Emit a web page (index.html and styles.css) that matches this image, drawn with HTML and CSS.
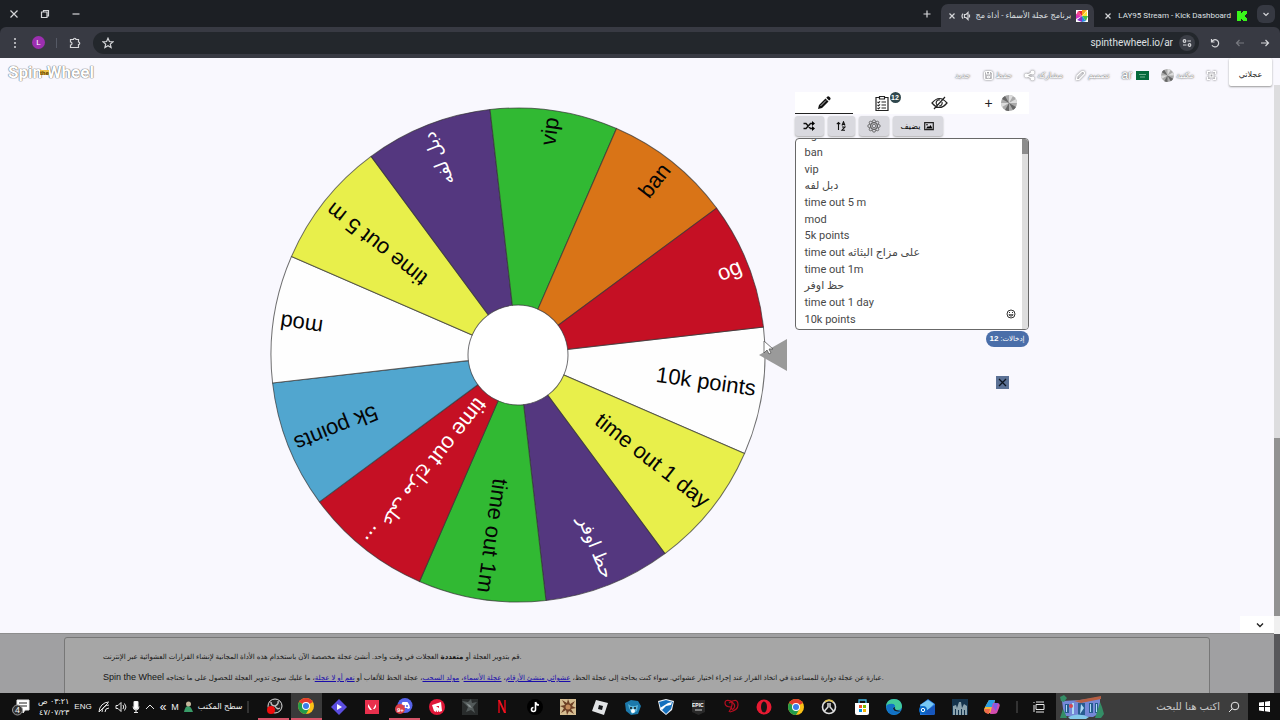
FILE: index.html
```html
<!DOCTYPE html>
<html lang="ar">
<head>
<meta charset="utf-8">
<title>برنامج عجلة الأسماء</title>
<link rel="stylesheet" href="styles.css">
</head>
<body>
<svg width="0" height="0" class="defs" aria-hidden="true">
  <defs>
    <path id="wedge" d="M48.3-12.9 238.6-63.9A247 247 0 0 1 238.6 63.9L48.3 12.9A50 50 0 0 0 48.3-12.9Z"/>
    <g id="chrome-logo">
      <circle cx="8" cy="8" r="8" fill="#fbc116"/>
      <path d="M8 8 1.1 4A8 8 0 0 1 14.9 4Z" fill="#e33b2e"/>
      <path d="M8 8 1.1 4A8 8 0 0 0 8 16L11.5 10Z" fill="#229b4b"/>
      <circle cx="8" cy="8" r="4" fill="#fff"/><circle cx="8" cy="8" r="3" fill="#3b7de9"/>
    </g>
    <g id="grey-wheel">
      <circle cx="8" cy="8" r="8" fill="#aaa"/>
      <path d="M8 8V0A8 8 0 0 1 12 1ZM8 8l7-4a8 8 0 0 1 1 4ZM8 8l-7 4a8 8 0 0 1-1-4Z" fill="#ddd"/>
      <path d="M8 8v8a8 8 0 0 1-4-1ZM8 8l7 4a8 8 0 0 1-3 3ZM8 8 1 4a8 8 0 0 1 3-3Z" fill="#666"/>
    </g>
  </defs>
</svg>

<header class="browser">
  <div class="tabstrip">
    <div class="window-buttons">
      <button aria-label="إغلاق"><svg width="10" height="10" viewBox="0 0 10 10"><path d="M1.500 1.500l7 7m0-7l-7 7"/></svg></button>
      <button aria-label="استعادة"><svg width="10" height="10" viewBox="0 0 10 10"><path d="M1.500 3h5.500v5.500H1.500zM3.500 3V1.500h5V7H7"/></svg></button>
      <button aria-label="تصغير"><svg width="10" height="10" viewBox="0 0 10 10"><path d="M1.500 5h7"/></svg></button>
    </div>
    <div class="tabs">
      <button class="new-tab" aria-label="علامة تبويب جديدة"><svg width="10" height="10" viewBox="0 0 10 10"><path d="M5 1.500v7M1.500 5h7"/></svg></button>
      <div class="tab active">
        <button aria-label="إغلاق"><svg width="8" height="8" viewBox="0 0 8 8"><path d="M1.500 1.500l5 5m0-5l-5 5"/></svg></button>
        <svg width="10" height="10" viewBox="0 0 10 10"><path d="M3.500 3.500v3h1.500l2 2v-7l-2 2zM2 2.500a4 4 0 0 0 0 5M8.500 3.500v3"/></svg>
        <span class="tab-title" dir="rtl">برنامج عجلة الأسماء - أداة مج</span>
        <svg class="solid" width="12" height="12" viewBox="0 0 12 12"><path fill="#fff" d="M0 0h12v12H0z"/><path fill="#e42537" d="M6 6 2 1h4z"/><path fill="#f6a21b" d="M6 6V0h5z"/><path fill="#fde233" d="M6 6l5-5v5z"/><path fill="#45be42" d="M6 6h6l-2 5z"/><path fill="#2788df" d="M6 6l4 5-4 1z"/><path fill="#8630c9" d="M6 6v6l-5-2z"/><path fill="#d935bc" d="M6 6 0 9V4z"/><path fill="#f24591" d="M6 6 0 5l2-4z"/></svg>
      </div>
      <div class="tab">
        <button aria-label="إغلاق"><svg width="8" height="8" viewBox="0 0 8 8"><path d="M1.500 1.500l5 5m0-5l-5 5"/></svg></button>
        <span>LAY95 Stream - Kick Dashboard</span>
        <svg class="solid" width="10" height="10" viewBox="0 0 10 10"><path fill="#39f51a" d="M0 0h4v2h1V1h1V0h4v3H9v1H8v2h1v1h1v3H6V9H5V8H4v2H0z"/></svg>
      </div>
      <button class="tab-search" aria-label="البحث في علامات التبويب"><svg width="8" height="8" viewBox="0 0 8 8"><path d="M1.500 3 4 5.500 6.500 3"/></svg></button>
    </div>
  </div>
  <div class="toolbar">
    <button aria-label="القائمة"><svg class="solid" width="10" height="12" viewBox="0 0 10 12"><g fill="#d5d6d9"><circle cx="5" cy="2" r="1"/><circle cx="5" cy="6" r="1"/><circle cx="5" cy="10" r="1"/></g></svg></button>
    <button class="avatar">L</button>
    <span class="divider"></span>
    <button aria-label="الإضافات"><svg width="12" height="12" viewBox="0 0 12 12"><path d="M1.500 2.500h3a1.200 1.200 0 0 1 2.500 0h2.500V5a1.200 1.200 0 0 1 0 2.500v3h-8V8a1.500 1.500 0 0 0 0-3z"/></svg></button>
    <div class="address">
      <button aria-label="إشارة مرجعية"><svg width="12" height="12" viewBox="0 0 12 12"><path d="M6 1.200 7.400 4.500l3.600.3-2.700 2.300.8 3.500L6 8.800l-3.100 1.800.8-3.500L1 4.800l3.600-.3z"/></svg></button>
      <input aria-label="العنوان" value="spinthewheel.io/ar">
      <button class="site-info" aria-label="معلومات الموقع"><svg width="10" height="10" viewBox="0 0 10 10"><circle cx="2.500" cy="3" r="1.300"/><path d="M5.500 3h3.500M1 7h3.500"/><circle cx="7.500" cy="7" r="1.300"/></svg></button>
    </div>
    <button aria-label="إعادة تحميل"><svg width="10" height="10" viewBox="0 0 10 10"><path d="M1.500 1v3h3M1.700 4A3.600 3.600 0 1 1 2 7.200"/></svg></button>
    <button class="dim" aria-label="للأمام"><svg width="10" height="10" viewBox="0 0 10 10"><path d="M9 5H1.500M4.500 2l-3 3 3 3"/></svg></button>
    <button aria-label="رجوع"><svg width="10" height="10" viewBox="0 0 10 10"><path d="M1 5h7.500M5.500 2l3 3-3 3"/></svg></button>
  </div>
</header>

<div class="viewport">
<div class="page">
  <header class="site-header">
    <a class="logo" href="#"><span>Spin</span><small>the</small><span>Wheel</span></a>
    <nav>
      <a href="#">جديد</a>
      <a href="#"><svg width="11" height="11" viewBox="0 0 11 11"><path d="M1.500 3q0-1.500 1.500-1.500h5L9.500 3v5q0 1.500-1.500 1.500H3Q1.500 9.500 1.500 8zM3.500 2v2h3V2"/><circle cx="5.500" cy="7" r="1"/></svg>حفظ</a>
      <a href="#"><svg width="11" height="11" viewBox="0 0 11 11"><path d="M8.500 2.500 2.500 5.500l6 3"/><g class="dots"><circle cx="8.500" cy="2.500" r="1.400"/><circle cx="2.500" cy="5.500" r="1.400"/><circle cx="8.500" cy="8.500" r="1.400"/></g></svg>مشاركة</a>
      <a href="#"><svg width="11" height="11" viewBox="0 0 11 11"><path d="M2 6 6.500 1.800q2-1 3 .8.300 1-.5 1.800L4 9.500l-2.500.2z"/></svg>تصميم</a>
      <a href="#" class="lang">ar<svg width="13" height="9" viewBox="0 0 13 9"><path d="M0 0h13v9H0z" fill="#056a3b"/><path d="M3 3.500h7M4 6h5" stroke="#9fd0b4" stroke-width=".7"/></svg></a>
      <a href="#"><svg width="13" height="13" viewBox="0 0 16 16" class="round"><use href="#grey-wheel"/></svg>مكتبة</a>
      <a href="#" aria-label="ملء الشاشة"><svg width="11" height="11" viewBox="0 0 11 11"><path d="M1.500 4V1.500H4M7 1.500h2.500V4M9.500 7v2.500H7M4 9.500H1.500V7M4 4h3v3H4z"/></svg></a>
      <button class="my-wheels">عجلاتي</button>
    </nav>
  </header>

  <main>
    <svg class="wheel" viewBox="-248 -248 520 496" role="img" aria-label="عجلة">
      <g class="slices">
        <use href="#wedge" transform="rotate(8.500)" fill="#fefefe"/>
        <use href="#wedge" transform="rotate(38.500)" fill="#e8ef4b"/>
        <use href="#wedge" transform="rotate(68.500)" fill="#54377f"/>
        <use href="#wedge" transform="rotate(98.500)" fill="#31b933"/>
        <use href="#wedge" transform="rotate(128.500)" fill="#c51024"/>
        <use href="#wedge" transform="rotate(158.500)" fill="#51a6cf"/>
        <use href="#wedge" transform="rotate(188.500)" fill="#fefefe"/>
        <use href="#wedge" transform="rotate(218.500)" fill="#e8ef4b"/>
        <use href="#wedge" transform="rotate(248.500)" fill="#54377f"/>
        <use href="#wedge" transform="rotate(278.500)" fill="#31b933"/>
        <use href="#wedge" transform="rotate(308.500)" fill="#d97417"/>
        <use href="#wedge" transform="rotate(338.500)" fill="#c51024"/>
      </g>
      <circle r="49" fill="#fff"/>
      <g class="labels">
        <text x="240" y="0" transform="rotate(8)">10k points</text>
        <text x="240" y="0" transform="rotate(38)">time out 1 day</text>
        <text x="240" y="0" transform="rotate(68)" class="light ar">حظ اوفر</text>
        <text x="240" y="0" transform="rotate(98)">time out 1m</text>
        <text x="240" y="0" transform="rotate(128)" class="light">time out <tspan class="ar">على مزاج</tspan> ...</text>
        <text x="240" y="0" transform="rotate(158)">5k points</text>
        <text x="240" y="0" transform="rotate(188)">mod</text>
        <text x="240" y="0" transform="rotate(218)">time out 5 m</text>
        <text x="240" y="0" transform="rotate(248)" class="light ar">دبل لفه</text>
        <text x="240" y="0" transform="rotate(278)">vip</text>
        <text x="240" y="0" transform="rotate(308)">ban</text>
        <text x="240" y="0" transform="rotate(338)" class="light">og</text>
      </g>
      <path d="M241 0 269-16V16Z" fill="#9a9a9a"/>
      <path d="M246-14v12l3-3 2 4 2-1-2-4h4z" fill="#fff" stroke="#555" stroke-width=".8"/>
    </svg>

    <section class="panel">
      <div class="panel-tabs">
        <button class="selected" aria-label="تحرير"><svg width="14" height="14" viewBox="0 0 14 14"><path d="M1 13 2 9 8.500 2.500l3 3L5 12zM9.300 1.700 10.500.6q1-.6 1.800.2l1 1q.6.900 0 1.600l-1.200 1.200z" fill="#111"/><path d="M3.500 10 9 4.500" stroke="#fff" stroke-width=".7"/></svg></button>
        <button aria-label="النتائج"><svg width="16" height="17" viewBox="0 0 16 17" class="line"><path d="M5 2.500H2v13h12v-13h-3M5.500 1.500h5v2.500h-5zM7.500 7H12M7.500 10H12M7.500 13H12M3.500 7l1 .8L6 6.300M3.500 10l1 .8L6 9.300M3.500 13l1 .8L6 12.300"/></svg><span class="badge">12</span></button>
        <button aria-label="إخفاء"><svg width="17" height="14" viewBox="0 0 17 14" class="line"><path d="M1 7q7.500-9 15 0-7.500 9-15 0zM3 13 14 1M6 9a3 3 0 0 1 3-5M11 6a3 3 0 0 1-3 4"/></svg></button>
        <button class="add" aria-label="إضافة عجلة">+<svg width="16" height="16" viewBox="0 0 16 16"><use href="#grey-wheel"/></svg></button>
      </div>
      <div class="tools">
        <button aria-label="خلط"><svg width="12" height="10" viewBox="0 0 12 10"><path d="M.5 2.500H3l4.500 5h2.500M.5 7.500H3l4.500-5h2.500" fill="none" stroke="#111" stroke-width="1.400"/><path d="M9 0l3 2.500L9 5zM9 5l3 2.500L9 10z"/></svg></button>
        <button aria-label="فرز"><svg width="10" height="10" viewBox="0 0 10 10"><path d="M2.500 9V1.500M.8 3.200 2.500 1.500l1.700 1.700M6 4.500 7.500.8 9 4.500M6.500 3.500h2M6 6h3L6 9.200h3" fill="none" stroke="#111" stroke-width="1.100"/></svg></button>
        <button aria-label="تأثير"><svg width="14" height="14" viewBox="-7 -7 14 14" class="thin"><circle r="1.800"/><circle r="3.400"/><circle cy="-4.700" r="1.500"/><circle cy="4.700" r="1.500"/><circle cx="-4.700" r="1.500"/><circle cx="4.700" r="1.500"/><circle cx="3.300" cy="3.300" r="1.500"/><circle cx="-3.300" cy="3.300" r="1.500"/><circle cx="3.300" cy="-3.300" r="1.500"/><circle cx="-3.300" cy="-3.300" r="1.500"/></svg></button>
        <button class="wide">يضيف<svg width="10" height="9" viewBox="0 0 10 9"><path d="M.7.700h8.600v7H.7z" fill="none" stroke="#222" stroke-width="1.200"/><path d="M2 6.500 4 4l1 1 1.500-2L8.500 6.500z"/><circle cx="3" cy="2.700" r=".8"/></svg></button>
      </div>
      <div class="entries">
        <ul>
          <li>og</li><li>ban</li><li>vip</li><li>دبل لفه</li><li>time out 5 m</li><li>mod</li><li>5k points</li><li>time out على مزاج البثاثه</li><li>time out 1m</li><li>حظ اوفر</li><li>time out 1 day</li><li>10k points</li>
        </ul>
        <div class="mini-scroll"><span></span></div>
        <button class="emoji" aria-label="رموز"><svg width="10" height="10" viewBox="0 0 10 10"><circle cx="5" cy="5" r="4"/><path d="M2.800 5.800q2.200 3 4.400 0z"/><path d="M3.500 3v1M6.500 3v1"/></svg></button>
      </div>
      <span class="count" dir="rtl">إدخالات: <b>12</b></span>
      <button class="close" aria-label="إغلاق"><svg width="13" height="13" viewBox="0 0 13 13"><path d="M3 3l7 7M10 3l-7 7" fill="none" stroke="#0c1420" stroke-width="1.300"/></svg></button>
    </section>
  </main>

  <button class="collapse" aria-label="طي"><svg width="10" height="8" viewBox="0 0 10 8"><path d="M2 2.500 5 5.500 8 2.500" fill="none" stroke="#222" stroke-width="1.400"/></svg></button>

  <section class="about">
    <article>
      <p>قم بتدوير العجلة أو <b>متعددة</b> العجلات في وقت واحد. أنشئ عجلة مخصصة الآن باستخدام هذه الأداة المجانية لإنشاء القرارات العشوائية عبر الإنترنت.</p>
      <p><span class="latin">Spin the Wheel</span> عبارة عن عجلة دوارة للمساعدة في اتخاذ القرار عند إجراء اختيار عشوائي. سواء كنت بحاجة إلى عجلة الحظ، <a href="#">عشوائي منشئ الأرقام</a>، <a href="#">عجلة الأسماء</a>، <a href="#">مولد السحب</a>، عجلة الحظ للألعاب أو <a href="#">نعم أو لا عجلة</a>، ما عليك سوى تدوير العجلة للحصول على ما تحتاجه.</p>
    </article>
  </section>
</div>
<div class="page-scroll"><span></span></div>
</div>

<footer class="taskbar">
  <div class="tray">
    <button class="notify" aria-label="الإشعارات"><svg width="20" height="18" viewBox="0 0 20 18"><path d="M6 2h12v10h-4l-2 3v-3H6z" fill="#fff"/><path d="M8 5h8M8 8h8" stroke="#222"/><circle cx="6.500" cy="12" r="5" fill="#333" stroke="#999"/></svg><span>4</span></button>
    <time dir="rtl"><span>٠٣:٢١ ص</span><span>٤٧/٠٧/٢٣</span></time>
    <button class="language">ENG</button>
    <svg width="12" height="12" viewBox="0 0 12 12"><path d="M1 11A10 10 0 0 1 11 1M4 11a7 7 0 0 1 7-7M7 11a4 4 0 0 1 4-4M1 11 10 2"/></svg>
    <svg width="12" height="12" viewBox="0 0 12 12"><path d="M1 4.500h2l3-3v9l-3-3H1zM8 4q1.500 2 0 4M9.500 2.500q3 3.500 0 7"/></svg>
    <svg width="8" height="12" viewBox="0 0 8 12"><rect x="2" width="4" height="8" rx="1" fill="#fff"/><path d="M1 5.500q0 3.500 3 3.500t3-3.500M4 9v2M2 11.500h4"/></svg>
    <svg width="10" height="10" viewBox="0 0 10 10"><path d="M1 7l4-4 4 4"/></svg>
    <div class="desk"><span class="more">«</span><span>M</span><svg width="9" height="12" viewBox="0 0 9 12"><path d="M0 11q1-6 4-6t5 6z" fill="#399c68" stroke="none"/><circle cx="4.500" cy="3" r="2.500" fill="#c6b79c" stroke="none"/></svg><span class="desk-name">سطح المكتب</span></div>
    <span class="grip"></span>
  </div>
  <div class="apps">
    <button class="open" aria-label="OBS"><svg width="18" height="16" viewBox="0 0 18 16"><circle cx="10" cy="8" r="7" fill="#222" stroke="#ddd"/><path d="M10 8q-4 0-4-4M10 8q4-2 3-5M10 8q2 4 5 2" stroke="#bbb" stroke-width="1.500"/><circle cx="6" cy="12" r="4" fill="#f00b0b" stroke="none"/></svg></button>
    <button class="open current" aria-label="Chrome"><svg width="16" height="16" viewBox="0 0 16 16" class="flat"><use href="#chrome-logo"/></svg></button>
    <button aria-label="Medal"><svg width="16" height="16" viewBox="0 0 16 16" class="flat"><path d="M8 0l8 8-8 8-8-8z" fill="#5b4de0"/><path d="M6 5v6l5-3z" fill="#fff"/></svg></button>
    <button aria-label="Valorant"><svg width="14" height="14" viewBox="0 0 14 14" class="flat"><path d="M0 0h14v14H0z" fill="#e8304d"/><path d="M3 4l4 6H5L3 7zM8 9l3-5v3L9.500 9z" fill="#fff"/></svg></button>
    <button class="open" aria-label="Discord"><svg width="18" height="16" viewBox="0 0 18 16" class="flat"><circle cx="10" cy="7.500" r="7.500" fill="#5663e8"/><path d="M6 10q0-4 1.500-6h5Q15 7 15 10l-2 1-1-1H9l-1 1z" fill="#fff"/><circle cx="9" cy="8" r="1" fill="#5663e8"/><circle cx="12" cy="8" r="1" fill="#5663e8"/><circle cx="5" cy="11" r="5" fill="#da3e45"/><text x="2" y="14">9+</text></svg></button>
    <button aria-label="Riot"><svg width="16" height="16" viewBox="0 0 16 16" class="flat"><circle cx="8" cy="8" r="8" fill="#df1738"/><path d="M3 6l9-3 1 9-3 1v-2l-1 2H8l-1-2v2l-2-1z" fill="#fff"/><path d="M7 7h3v2z" fill="#df1738"/></svg></button>
    <button aria-label="Game"><svg width="16" height="16" viewBox="0 0 16 16" class="flat"><path d="M0 0h16v16H0z" fill="#292c2c"/><path d="M0 2l6 1 3-3 1 4 5-1-4 5 2 6-4-3-5 2 2-5-3-3z" fill="#535a5a"/><path d="M4 4l4 2 2 3-3-1z" fill="#8a9292"/></svg></button>
    <button aria-label="Netflix"><svg width="8" height="13" viewBox="0 0 8 13" class="flat"><path d="M0 0h2v13H0zM6 0h2v13H6z" fill="#a70914"/><path d="M0 0h2l6 13H6z" fill="#ee1320"/></svg></button>
    <button aria-label="TikTok"><svg width="16" height="16" viewBox="0 0 16 16"><circle cx="8" cy="8" r="8" fill="#000" stroke="none"/><path d="M8.500 3v7.500a2 2 0 1 1-2-2M8.500 3q.5 3 3.500 3" stroke="#fff" stroke-width="1.600"/></svg></button>
    <button aria-label="Game"><svg width="16" height="16" viewBox="0 0 16 16" class="flat"><path d="M0 0h16v16H0z" fill="#d5bd91"/><path d="M8 0l2 5 5-3-3 5 4 2-5 1 3 5-5-3-2 4-1-5-5 3 3-5-4-2 5-1-3-5 5 3z" fill="#6d4026"/><circle cx="8" cy="8" r="2.500" fill="#c48b5b"/></svg></button>
    <button aria-label="Roblox"><svg width="16" height="16" viewBox="0 0 16 16" class="flat"><path d="M4 1l12 3-4 12L0 12z" fill="#e1e3e5"/><path d="M7 6l4 1-1 4-4-1z" fill="#15171a"/></svg></button>
    <button aria-label="Game"><svg width="16" height="16" viewBox="0 0 16 16" class="flat"><path d="M0 4l6-3 7 1 3 5-3 8-7 1-5-4z" fill="#1c79ab"/><path d="M4 9l-1-4 3 2h4l3-1-1 6-5 3z" fill="#58b3d8"/><circle cx="6" cy="9" r="1"/><circle cx="10" cy="9" r="1"/><circle cx="8" cy="12" r="2" fill="#fff"/></svg></button>
    <button aria-label="Rocket League"><svg width="16" height="16" viewBox="0 0 16 16" class="flat"><path d="M0 2l8-2 8 2-2 9-6 5-6-5z" fill="#f1f5fa"/><path d="M1 3l7-2 7 2-2 7-5 5-5-5z" fill="#1570bd"/><path d="M2 9l8-5 4-1-1 3-5 1-4 4z" fill="#fff"/></svg></button>
    <button aria-label="Epic Games"><svg width="13" height="16" viewBox="0 0 13 16" class="flat"><path d="M0 1h13v12l-6.500 3L0 13z" fill="#292929"/><text x="0" y="8" class="epic">EPIC</text><path d="M3 11h7" stroke="#ccc"/></svg></button>
    <button aria-label="App"><svg width="16" height="16" viewBox="0 0 16 16"><path d="M8 8Q2 8 2 4t6-2q3 3-2 11M6 4q9-6 9 2 0 5-8 7M9 3q4 3 2 6T8 8" stroke="#b80e20" stroke-width="1.200"/></svg></button>
    <button aria-label="Opera"><svg width="16" height="16" viewBox="0 0 16 16" class="flat"><circle cx="8" cy="8" r="7.500" fill="#e71a32"/><ellipse cx="8" cy="8" rx="3" ry="5.500" fill="#151515"/></svg></button>
    <button aria-label="Chrome"><svg width="16" height="16" viewBox="0 0 16 16" class="flat"><use href="#chrome-logo"/></svg></button>
    <button aria-label="Overwatch"><svg width="16" height="16" viewBox="0 0 16 16"><circle cx="8" cy="8" r="6.500" stroke="#ddd" stroke-width="1.600"/><path d="M4 2.700a6.500 6.500 0 0 1 8 0" stroke="#dfc14c" stroke-width="1.800"/><path d="M3.500 12 7 8V4M12.500 12 9 8V4" stroke="#ddd" stroke-width="1.500"/></svg></button>
    <button aria-label="Store"><svg width="16" height="16" viewBox="0 0 16 16" class="flat"><path d="M5 4V1h7v3" fill="none" stroke="#42b7e4" stroke-width="1.300"/><path d="M1 4h14v10q0 2-2 2H3q-2 0-2-2z" fill="#fff"/><path d="M5 6h3v3H5z" fill="#ed5028"/><path d="M9 6h3v3H9z" fill="#7fba00"/><path d="M5 10h3v3H5z" fill="#0092df"/><path d="M9 10h3v3H9z" fill="#f5b500"/></svg></button>
    <button aria-label="Edge"><svg width="16" height="16" viewBox="0 0 16 16" class="flat"><circle cx="8" cy="8" r="8" fill="#1688d8"/><path d="M0 7Q1 0 8 0t8 7q0 4-5 4-2 0-2-2 1-4-4-4-3 0-5 2z" fill="#43ca9a"/><path d="M1 6q7-3 8 1-4 1-1 5 3 2 6 0-3 5-9 3Q0 12 1 6" fill="#1271c5"/><path d="M7 9q1 5 8 3-3-.5-5-1-2-1-1-3z" fill="#171a1d"/></svg></button>
    <button aria-label="Outlook"><svg width="16" height="16" viewBox="0 0 16 16" class="flat"><path d="M1 6l8-6 7 5v9q0 2-2 2H1z" fill="#2779de"/><path d="M1 6l8-5 6 4-7 7z" fill="#77c8f4"/><path d="M2 15 16 6v8q0 2-2 2z" fill="#1757bd"/><circle cx="4" cy="11" r="4" fill="#0869c8"/><circle cx="4" cy="11" r="1.700" fill="none" stroke="#fff"/></svg></button>
    <button aria-label="Game"><svg width="16" height="16" viewBox="0 0 16 16" class="flat"><path d="M0 0h16v16H0z" fill="#14334c"/><path d="M1 16V7l3-1 1 3 2-6h2l1 6 2-4 3 2v9h-2v-5h-1v5h-2v-6H9v6H7v-5H6v5H4v-6H3v6z" fill="#8ba3ae"/></svg></button>
    <button aria-label="Copilot"><svg width="16" height="16" viewBox="0 0 16 16" class="flat"><path d="M5 1h6l-3 13H3q-3 0-3-4z" fill="#f1b83f"/><path d="M5 1h6l-2 7H1z" fill="#299ee6"/><path d="M9 4h4q4 0 2 5l-2 5q-1 1-4 1H6z" fill="#d34cad"/><path d="M9 8l1-4h4l-2 8z" fill="#825be3"/><path d="M0 10h6l-1 5q-4 0-5-5" fill="#f06a4c"/></svg></button>
  </div>
  <span class="grip"></span>
  <button class="task-view" aria-label="عرض المهام"><svg width="12" height="12" viewBox="0 0 12 12"><path d="M3 3.500h8v5H3zM3 1h8M3 11h8M1 1v1M1 4v7"/></svg></button>
  <label class="search">
    <svg width="44" height="24" viewBox="0 0 44 24" class="flat"><path d="M2 6l18-1 20-3v16l-7 4-29-1z" fill="#7588d7"/><path d="M14 6 41 1v3L21 8z" fill="#b65f43"/><path d="M5 9h4v9H5zM18 8h7v12h-7zM29 8h4v10h-4zM35 8h3v10h-3z" fill="#275c91"/><path d="M6 10h1v7H6zM21 9l3 4-4 6zM30 9h1v8h-1zM36 9h1v8h-1zM12 8h2v11h-2z" fill="#aedcf5"/><path d="M0 2l4-2 3 3-3 4-3-1zM0 23l3-9 2 4 2 5zM35 23l3-9 2-7 2 5 2 7-3 4z" fill="#348d66"/><path d="M8 22q10-5 21 0l-3 2H10z" fill="#83c9ea"/><circle cx="11" cy="11" r="2" fill="#d34752"/></svg>
    <input dir="rtl" placeholder="اكتب هنا للبحث" aria-label="بحث">
    <svg width="12" height="12" viewBox="0 0 12 12"><circle cx="7" cy="5" r="3.800"/><path d="M4.200 7.800 1 11"/></svg>
  </label>
  <button class="start" aria-label="ابدأ"><svg width="11" height="11" viewBox="0 0 11 11" class="flat"><path d="M0 1.500 5 1v4H0zM6 .800 11 0v5H6zM0 6h5v4.200l-5-.7zM6 6h5v5l-5-.7z" fill="#fff"/></svg></button>
</footer>
</body>
</html>
```
FILE: styles.css
```css
* { box-sizing: border-box; }
body {
  margin: 0;
  height: 100vh;
  display: flex;
  flex-direction: column;
  overflow: hidden;
  font-family: "Liberation Sans", "DejaVu Sans", sans-serif;
  font-size: 12px;
  background: #f9f8fe;
}
button { border: 0; padding: 0; margin: 0; background: none; font: inherit; color: inherit; display: flex; align-items: center; justify-content: center; }
input { border: 0; background: none; font: inherit; color: inherit; min-width: 0; padding: 0; }
svg { display: block; flex: none; }
p, ul { margin: 0; padding: 0; }
.defs { position: absolute; }

/* browser chrome */
.browser { flex: none; color: #dfe0e3; font-family: Roboto, "DejaVu Sans", sans-serif; background: #1c1f24; }
.browser svg { fill: none; stroke: #d5d6d9; stroke-width: 1.2; }
.browser svg.solid { stroke: none; }
.tabstrip { height: 27px; display: flex; justify-content: space-between; font-size: 8px; }
.window-buttons { display: flex; align-items: center; gap: 21px; padding-left: 9px; }
.tabs { display: flex; align-items: center; }
.new-tab { padding: 0 9px; }
.tab { display: flex; align-items: center; gap: 6px; height: 23px; align-self: flex-end; padding: 0 10px; white-space: nowrap; }
.tab.active { background: #383a43; border-radius: 7px 7px 0 0; padding: 0 6px 0 7px; gap: 5px; }
.tab-search { width: 18px; height: 18px; border-radius: 6px; background: #363942; margin-right: 5px; }
.toolbar { height: 31px; display: flex; align-items: center; gap: 15px; padding: 0 10px; background: #383a43; border-radius: 6px 6px 0 0; }
.toolbar > button:first-child { margin-right: -3px; }
.avatar { width: 13px; height: 13px; border-radius: 50%; background: #9c2fb0; font-size: 8px; color: #fff; }
.divider { width: 1px; height: 10px; background: #555965; margin: 0 -3px 0 -4px; }
.address { flex: 1; height: 22px; border-radius: 11px; background: #23272c; display: flex; align-items: center; padding: 0 4px 0 9px; gap: 6px; margin-left: -3px; margin-right: -4px; }
.address input { flex: 1; text-align: right; font-size: 10px; }
.site-info { width: 16px; height: 16px; border-radius: 50%; background: #3b3e46; }
.dim { opacity: .4; }

/* page */
.viewport { flex: 1; min-height: 0; display: flex; }
.page { flex: 1; min-width: 0; display: flex; flex-direction: column; overflow: hidden; }
.site-header { display: flex; justify-content: space-between; height: 34px; flex: none; padding: 0 2px 0 8px; }
.logo { display: flex; align-items: center; height: 28px; text-decoration: none; font-family: Roboto, "Liberation Sans", sans-serif; font-size: 17px; font-weight: 700; color: #fff; text-shadow: 0 0 1px #666, 0 0 1px #888, 0 0 1px #888; }
.logo small { font-size: 6px; color: #5f4200; background: #edc14a; margin: 0 -2px; line-height: 5px; z-index: 1; text-shadow: none; }
nav { display: flex; align-items: center; gap: 12px; height: 34px; font-size: 8px; }
nav a { display: flex; align-items: center; gap: 2px; color: #fff; text-decoration: none; text-shadow: 0 0 2px #555, 0 0 1px #777; white-space: nowrap; }
nav svg { fill: none; stroke: #fff; stroke-width: 1.2; filter: drop-shadow(0 0 1px #555); }
nav svg .dots { fill: #fff; }
nav .round, nav .lang svg { stroke: none; filter: none; }
.lang { font-size: 12px; gap: 4px; }
.my-wheels { background: #fff; color: #222; width: 43px; height: 28px; align-self: flex-start; border-radius: 2px; box-shadow: 0 1px 2px #999; padding-top: 4px; }
main { flex: 1; min-height: 0; display: flex; justify-content: center; gap: 5px; padding-left: 24px; }
.wheel { width: 520px; height: 496px; margin-top: 15px; }
.slices { stroke: #333; stroke-opacity: .7; stroke-width: 1; }
.labels { font-size: 22px; text-anchor: end; dominant-baseline: central; fill: #050505; }
.labels .light { fill: #fff; }
.labels .ar { font-size: 18px; }

.panel { width: 234px; display: flex; flex-direction: column; }
.panel-tabs { display: flex; height: 22px; background: #fff; }
.panel-tabs button { width: 58px; position: relative; }
.panel-tabs .selected { border-bottom: 1px solid #222; }
.panel-tabs .add { width: 60px; gap: 8px; padding-left: 4px; font-size: 14px; color: #222; }
.line { fill: none; stroke: #222; stroke-width: 1.2; }
.badge { position: absolute; left: 37px; top: 0; width: 11px; height: 11px; border-radius: 50%; background: #2f474d; color: #fff; font-size: 7px; line-height: 11px; font-weight: bold; }
.tools { display: flex; gap: 4px; margin-top: 2px; }
.tools button { width: 29px; height: 20px; border-radius: 3px; background: #d9d9df; box-shadow: 0 1px 2px #aaa; }
.tools button:nth-child(2) { width: 27px; }
.tools button:nth-child(3) { width: 30px; }
.tools button.wide { width: 50px; gap: 4px; font-size: 8px; }
.thin { fill: none; stroke: #555; stroke-width: .8; }
.entries { position: relative; display: flex; justify-content: space-between; height: 192px; margin-top: 2px; border: 1px solid #686868; border-radius: 4px; background: #fff; overflow: hidden; }
.entries ul { list-style: none; align-self: flex-end; padding: 0 0 2px 9px; font: 11px/17px Roboto, "DejaVu Sans", sans-serif; color: #484848; white-space: nowrap; }
.entries li { height: 17px; }
.entries li:nth-child(3n) { height: 16px; }
.mini-scroll { width: 6px; background: #dedede; }
.mini-scroll span { display: block; height: 15px; background: #8c8c8c; }
.emoji { position: absolute; right: 12px; bottom: 10px; }
.emoji svg { fill: none; stroke: #333; }
.count { align-self: flex-end; margin-top: 1px; height: 16px; padding: 0 4px; border-radius: 8px; background: #4a6ea9; color: #fff; font-size: 7px; line-height: 16px; white-space: nowrap; }
.count b { font-size: 8px; }
.close { align-self: flex-end; margin: 29px 20px 0 0; background: #5b7195; }
.collapse { align-self: flex-end; width: 34px; height: 17px; flex: none; background: #fff; padding-left: 6px; }
.about { flex: none; height: 60px; overflow: hidden; padding: 3px 64px 0; background: #a0a0a2; border-top: 1px solid #8e8e8e; }
.about article { height: 90px; border: 1px solid #777; border-radius: 3px; background: #a6a6a6; padding: 8px 38px; font: 7px/21px "Liberation Sans", "DejaVu Sans", sans-serif; color: #151515; white-space: nowrap; }
.about .latin { font-size: 9px; }
.about a { color: #1a0dab; }
.page-scroll { width: 6px; padding-top: 27px; background: linear-gradient(#f9f8fe 27px, #dddddf 27px); display: flex; align-items: flex-end; }
.page-scroll span { width: 100%; height: 42%; background: linear-gradient(#929292 70%, #f0f0f0 70% 77%, #57575a 77%); }

/* taskbar */
.taskbar { flex: none; height: 27px; display: flex; align-items: center; background: #101010; color: #f2f2f2; font-size: 9px; }
.taskbar svg { fill: none; stroke: #e9e9e9; }
.taskbar svg.flat { stroke: none; fill: #111; }
.tray { display: flex; align-items: center; gap: 5px; padding-left: 11px; white-space: nowrap; flex: none; width: 258px; }
.notify { position: relative; margin-right: 2px; }
.notify span { position: absolute; left: 4px; top: 7px; font-size: 9px; line-height: 10px; }
time { display: flex; flex-direction: column; line-height: 11px; width: 32px; font-size: 8px; }
.language { font-size: 8px; margin: 0 1px 0 0; }
.desk { display: flex; align-items: center; gap: 5px; flex: 1; }
.desk .more { font-size: 12px; line-height: 12px; }
.desk-name { font-size: 8px; }
.grip { width: 2px; height: 12px; background: #333; }
.tray .grip { margin-right: 9px; }
.apps { display: flex; flex: 1; justify-content: space-between; padding-right: 8px; }
.apps button { width: 31px; height: 27px; }
.apps .open { border-bottom: 2px solid #d45468; }
.apps .current { background: #3a3a3a; }
.apps text { font-size: 6px; font-weight: bold; fill: #fff; stroke: none; }
.apps .epic { font-size: 5px; }
.task-view { width: 38px; padding-left: 4px; }
.search { width: 192px; height: 27px; background: #3d3d3d; display: flex; align-items: center; gap: 8px; padding: 0 8px 0 4px; font: 10px "DejaVu Sans", sans-serif; }
.search input { flex: 1; }
.search input::placeholder { color: #c9c9c9; opacity: 1; }
.start { width: 32px; }
```
